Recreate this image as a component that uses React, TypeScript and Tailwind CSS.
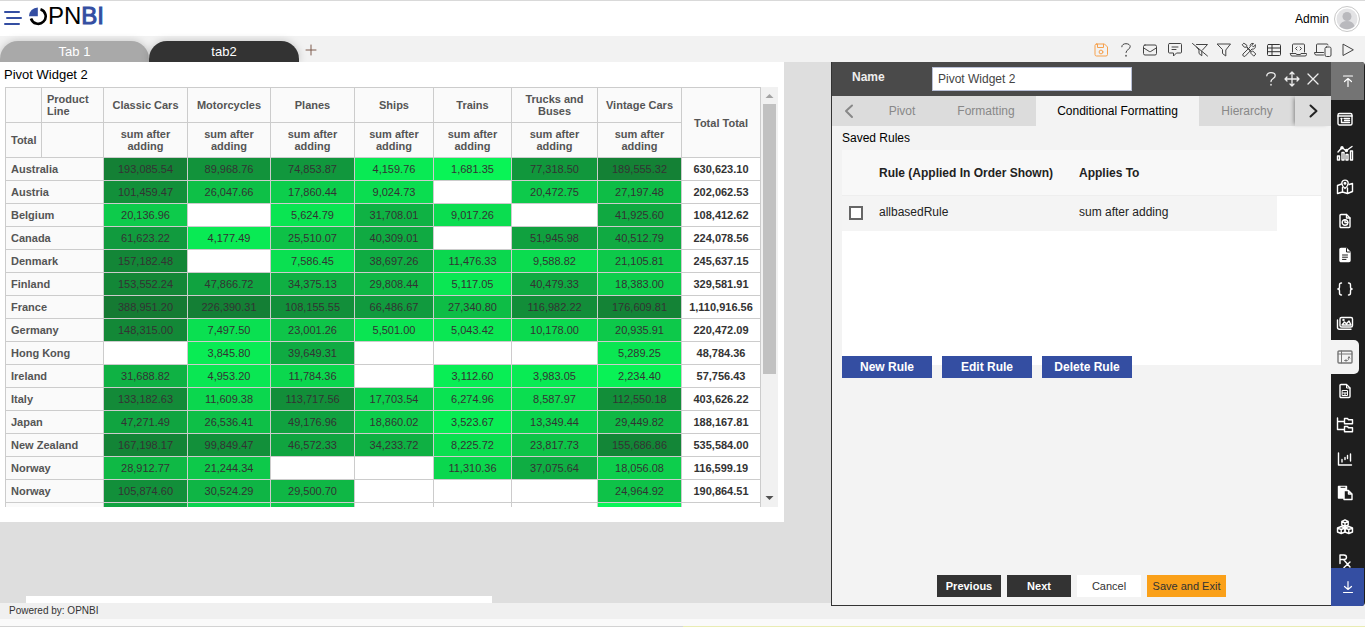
import React, { useState } from 'react';

interface IconProps {
  children: React.ReactNode;
  className?: string;
  weight?: number;
}

const Icon: React.FC<IconProps> = ({ children, className = 'size-4', weight = 1 }) => (
  <svg
    viewBox="0 0 16 16"
    className={`shrink-0 overflow-visible ${className}`}
    fill="none"
    stroke="currentColor"
    strokeWidth={weight}
    strokeLinecap="round"
    strokeLinejoin="round"
    aria-hidden="true"
  >
    {children}
  </svg>
);

const questionPath = (
  <>
    <path d="M3.8 4.8C3.8 2.8 5.600 1.700 8 1.700s4.200 1.100 4.200 3c0 2.800-4.200 2.700-4.200 5.800" />
    <path d="M8 13.500v.6" strokeWidth={1.500} />
  </>
);

const toolbarIcons = [
  {
    label: 'Save',
    color: 'text-[#f6a14d]',
    art: (
      <>
        <path d="M3.500 2h8L14.500 5v7.500a1.500 1.500 0 0 1-1.500 1.500H3.500A1.500 1.500 0 0 1 2 12.500v-9A1.500 1.500 0 0 1 3.500 2z" />
        <path d="M4.500 2.200v3.300h6V2.200" />
        <circle cx="8" cy="10" r="1.900" />
      </>
    ),
  },
  { label: 'Help', color: 'text-[#444]', art: questionPath },
  {
    label: 'Mail',
    color: 'text-[#444]',
    art: (
      <>
        <rect x="1.500" y="3" width="13" height="10" rx="1.500" />
        <path d="M1.800 6l5.500 3.500q.7.400 1.400 0L14.200 6" />
      </>
    ),
  },
  {
    label: 'Comment',
    color: 'text-[#444]',
    art: (
      <>
        <path d="M2.500 1.500h11a1 1 0 0 1 1 1v7.500a1 1 0 0 1-1 1H9.500L6.500 14v-3h-4a1 1 0 0 1-1-1V2.500a1 1 0 0 1 1-1z" />
        <path d="M5 5h6M5 7.500h4" />
      </>
    ),
  },
  {
    label: 'Clear filter',
    color: 'text-[#444]',
    art: (
      <>
        <path d="M4.500 2.500h11L10.500 8M9.800 9v4.800L7 11.500V8L4.500 5" />
        <path d="M.5 1.500L15.500 14" />
      </>
    ),
  },
  {
    label: 'Filter',
    color: 'text-[#444]',
    art: <path d="M1.500 2h13L9.800 8v6L6.500 11.500V8z" />,
  },
  {
    label: 'Tools',
    color: 'text-[#444]',
    art: (
      <>
        <path d="M1.500 2.500L2.800 1.200l3 2v1.600l4.600 4.600 1.400-.4 3 3-2 2.200-3-3 .2-1.500L5.400 5.200H3.700z" />
        <path d="M14.300 3.200l-2.100 1.600-1.300-1.300L12.500 1.500C10.300.8 8.600 2.800 9.300 4.800L2 12a1.600 1.600 0 0 0 2.200 2.200L11 7c2.300.7 4.200-1.500 3.300-3.800z" />
      </>
    ),
  },
  {
    label: 'Table',
    color: 'text-[#333]',
    art: (
      <>
        <rect x="1.500" y="2.500" width="13" height="11" rx="1" />
        <path d="M1.500 6h13M1.500 9.700h13M6 2.500v11" />
      </>
    ),
  },
  {
    label: 'Script',
    color: 'text-[#444]',
    art: (
      <>
        <path d="M1.500 10V3a1 1 0 0 1 1-1h10a1 1 0 0 1 1 1v7" />
        <path d="M-.5 11.500h5.500q0 1 1 1h3q1 0 1-1h5.500v1a1.500 1.500 0 0 1-1.500 1.500h-13a1.500 1.500 0 0 1-1.500-1.500z" />
        <path d="M6 5L4.500 6.500 6 8M9 5l1.500 1.500L9 8" />
      </>
    ),
  },
  {
    label: 'Devices',
    color: 'text-[#444]',
    art: (
      <>
        <path d="M1.500 10V3a1 1 0 0 1 1-1H12q1 0 1 1" />
        <path d="M8.500 10.500H-.5q0 2.500 1.500 2.500h7.500" />
        <rect x="10" y="5" width="6" height="9.500" rx="1.500" />
      </>
    ),
  },
  { label: 'Run', color: 'text-[#444]', art: <path d="M3 2.500v11L13 8z" /> },
];

const fileOutline = 'M4 1.500h5.500L13 5v8.500a1 1 0 0 1-1 1H4a1 1 0 0 1-1-1v-11a1 1 0 0 1 1-1z';

const sideIcons = [
  {
    label: 'List widget',
    art: (
      <>
        <rect x="1" y="2.500" width="14" height="11.500" rx="1.500" />
        <path d="M1 5h14M4 7.500h1M7 7.500h5.500M4.500 7.500v4h8M7.500 9.500h5" />
      </>
    ),
  },
  {
    label: 'Chart widget',
    art: (
      <>
        <path d="M1 7L5 2.500l4 3.200L15 1.500" />
        <circle cx="5" cy="2.800" r="1" />
        <circle cx="9.500" cy="5.500" r="1" />
        <path d="M.5 11h2v4h-2zM5 7.500h2V15H5zM9 9.500h2V15H9zM13.500 6h2v9h-2z" />
      </>
    ),
  },
  {
    label: 'Map widget',
    art: (
      <>
        <path d="M4.500 5L.5 6.500v8L5.500 13l5 1.500 5-2V4.500L12 5.500M5.500 8.500V13M10.500 9v5.500" />
        <path d="M8 9.500S4.800 6.800 4.800 4.300a3.200 3.200 0 0 1 6.400 0C11.200 6.800 8 9.500 8 9.500z" />
        <circle cx="8" cy="4.300" r=".8" />
      </>
    ),
  },
  {
    label: 'Report widget',
    art: (
      <>
        <path d={fileOutline} />
        <path d="M9.500 1.500V5H13" />
        <circle cx="8" cy="9.500" r="2.800" />
        <path d="M8 6.700v2.800h2.800" />
      </>
    ),
  },
  {
    label: 'Text widget',
    art: (
      <>
        <path d={fileOutline} fill="currentColor" />
        <path d="M5.500 8h5M5.500 10.200h5M5.500 12.400h3.500M9.500 1.500V5H13" stroke="#1e1e1e" strokeWidth={1} />
      </>
    ),
  },
  {
    label: 'Code widget',
    art: (
      <path d="M4.500 2Q2.500 2 2.500 4v2Q2.500 8 .8 8q1.700 0 1.700 2v2q0 2 2 2M11.500 2q2 0 2 2v2q0 2 1.700 2-1.700 0-1.700 2v2q0 2-2 2" />
    ),
  },
  {
    label: 'Image widget',
    art: (
      <>
        <rect x="3" y="2.500" width="12.500" height="9.500" rx="1.500" />
        <path d="M.5 5v7.500Q.5 14.200 2.500 14.200H14" />
        <path d="M5 10l2.500-3 2 1.800L12 6l2 4z" />
        <circle cx="6.500" cy="5" r=".5" />
      </>
    ),
  },
  {
    label: 'Pivot widget',
    art: (
      <>
        <rect x="1" y="2" width="14" height="12" rx="1" />
        <path d="M1 5h14M4.500 2v12M8 11.500h2.500Q12 11.500 12 8M8 11.500l1-1M8 11.500l1 1M12 8l-1 1M12 8l1 1" strokeWidth={1} />
      </>
    ),
  },
  {
    label: 'Document widget',
    art: (
      <>
        <path d={fileOutline} />
        <path d="M9.500 1.500V5H13M5.500 7.500h5v5h-5zM5.500 10h5M8 10v2.500" strokeWidth={1} />
      </>
    ),
  },
  {
    label: 'Tree widget',
    art: (
      <>
        <path d="M.5 1v11.500H7M.5 4.500H7" />
        <path d="M7.500 1.500h3l1 1.200h4v4h-8zM7.500 9.500h3l1 1.200h4v4h-8z" />
      </>
    ),
  },
  {
    label: 'Range chart widget',
    art: <path d="M1.500 2v12h13M5 8.500V11M8 6.500v2M10.500 4.500v3M13.500 3v7" />,
  },
  {
    label: 'Copy widget',
    art: (
      <>
        <path d="M1.500 1.500h8V5H6.500v8h-5z" fill="currentColor" />
        <path d="M4 2.300h4" stroke="#1e1e1e" strokeWidth={1} />
        <path d="M7 5.500h4.500L15 9v5.500H7zM11.500 5.500V9H15" />
      </>
    ),
  },
  {
    label: 'Cube widget',
    art: (
      <>
        <path d="M8 .8l3.200 1.500V6L8 7.500 4.800 6V2.300zM4.800 2.500L8 4l3.200-1.500M8 4v3.500" />
        <path d="M4.200 7.500L8 9v4l-3.800 1.500L.5 13V9zM.5 9l3.700 1.500L8 9M4.200 10.500v4" />
        <path d="M11.800 7.500L15.500 9v4l-3.700 1.500L8 13V9zM8 9l3.800 1.500L15.500 9M11.800 10.500v4" />
      </>
    ),
  },
  {
    label: 'Formula widget',
    art: <path d="M3 10.500V2h3.800q2.700 0 2.700 2.200T6.800 6.500H3M6.500 6.500L13 14M13 9l-6 5.500" />,
  },
];

const columns = ['Classic Cars', 'Motorcycles', 'Planes', 'Ships', 'Trains', 'Trucks and Buses', 'Vintage Cars'];

type Row = { name: string; values: (number | null)[]; total: number };

const rows: Row[] = [
  { name: 'Australia', values: [193085.54, 89968.76, 74853.87, 4159.76, 1681.35, 77318.5, 189555.32], total: 630623.1 },
  { name: 'Austria', values: [101459.47, 26047.66, 17860.44, 9024.73, null, 20472.75, 27197.48], total: 202062.53 },
  { name: 'Belgium', values: [20136.96, null, 5624.79, 31708.01, 9017.26, null, 41925.6], total: 108412.62 },
  { name: 'Canada', values: [61623.22, 4177.49, 25510.07, 40309.01, null, 51945.98, 40512.79], total: 224078.56 },
  { name: 'Denmark', values: [157182.48, null, 7586.45, 38697.26, 11476.33, 9588.82, 21105.81], total: 245637.15 },
  { name: 'Finland', values: [153552.24, 47866.72, 34375.13, 29808.44, 5117.05, 40479.33, 18383.0], total: 329581.91 },
  { name: 'France', values: [388951.2, 226390.31, 108155.55, 66486.67, 27340.8, 116982.22, 176609.81], total: 1110916.56 },
  { name: 'Germany', values: [148315.0, 7497.5, 23001.26, 5501.0, 5043.42, 10178.0, 20935.91], total: 220472.09 },
  { name: 'Hong Kong', values: [null, 3845.8, 39649.31, null, null, null, 5289.25], total: 48784.36 },
  { name: 'Ireland', values: [31688.82, 4953.2, 11784.36, null, 3112.6, 3983.05, 2234.4], total: 57756.43 },
  { name: 'Italy', values: [133182.63, 11609.38, 113717.56, 17703.54, 6274.96, 8587.97, 112550.18], total: 403626.22 },
  { name: 'Japan', values: [47271.49, 26536.41, 49176.96, 18860.02, 3523.67, 13349.44, 29449.82], total: 188167.81 },
  { name: 'New Zealand', values: [167198.17, 99849.47, 46572.33, 34233.72, 8225.72, 23817.73, 155686.86], total: 535584.0 },
  { name: 'Norway', values: [28912.77, 21244.34, null, null, 11310.36, 37075.64, 18056.08], total: 116599.19 },
  { name: 'Norway', values: [105874.6, 30524.29, 29500.7, null, null, null, 24964.92], total: 190864.51 },
];

// value, [r, g, b]
const scale: [number, [number, number, number]][] = [
  [0, [8, 250, 88]],
  [5600, [10, 229, 82]],
  [11500, [11, 215, 78]],
  [20000, [13, 203, 75]],
  [26000, [14, 192, 71]],
  [31700, [15, 178, 68]],
  [47900, [16, 163, 64]],
  [61600, [17, 155, 62]],
  [101000, [18, 144, 58]],
  [193000, [20, 128, 53]],
  [389000, [21, 122, 51]],
];

const shade = (value: number) => {
  const upper = Math.max(1, scale.findIndex(([stop]) => stop >= value));
  const [lowStop, low] = scale[upper - 1];
  const [highStop, high] = scale[upper];
  const t = (value - lowStop) / (highStop - lowStop);
  return `rgb(${low.map((c, i) => Math.round(c + (high[i] - c) * t)).join(', ')})`;
};

const money = (value: number) =>
  value.toLocaleString('en-US', { minimumFractionDigits: 2, maximumFractionDigits: 2 });

const Logo = () => (
  <a href="#" className="flex items-center text-[24px] leading-6 text-black" aria-label="OPNBI home">
    <svg viewBox="0 0 19 19" className="size-[19px]" aria-hidden="true">
      <path d="M11.500 2.200A7.500 7.500 0 1 1 2 11.500" fill="none" stroke="#000" strokeWidth="2.600" />
      <path d="M8.800 9.300H0A8.800 8.800 0 0 1 8.800.5z" fill="#344ea2" />
    </svg>
    <span>PN</span>
    <span className="text-[#344ea2] [-webkit-text-stroke:1px_#344ea2]">BI</span>
  </a>
);

const Header = () => (
  <header className="flex h-9 items-center justify-between border-t border-[#d9d9d9] bg-white pl-1 pr-1">
    <div className="flex items-center gap-[7px] pb-[5px]">
      <button type="button" aria-label="Menu" className="text-[#344ea2]">
        <svg viewBox="0 0 18 16" className="mt-1 h-4 w-[18px]" stroke="currentColor" strokeWidth="2" strokeLinecap="round">
          <path d="M1 2h14M3 8h14M1 14h14" />
        </svg>
      </button>
      <Logo />
    </div>
    <div className="flex items-center gap-1 text-xs text-black">
      <span>Admin</span>
      <svg viewBox="0 0 28 28" className="size-7" aria-hidden="true">
        <circle cx="14" cy="14" r="12.500" fill="#fff" stroke="#c8c8c8" />
        <circle cx="14" cy="14" r="10.500" fill="#e3e3e5" />
        <circle cx="14" cy="11.500" r="4.500" fill="#b9b9bd" />
        <path d="M6.500 21q1.500-5 7.500-5t7.500 5a10.500 10.500 0 0 1-15 0z" fill="#b9b9bd" />
      </svg>
    </div>
  </header>
);

const TabBar = () => (
  <nav className="flex h-[26px] items-end justify-between bg-[#f2f2f2] pr-[9px]">
    <div className="flex items-end text-[13px] leading-[21px] text-white">
      <button type="button" className="h-[21px] w-[149px] rounded-t-[18px] bg-[#a9a9a9] shadow-[0_0_8px_rgba(0,0,0,0.2)]">
        Tab 1
      </button>
      <button type="button" className="h-[21px] w-[150px] rounded-t-[18px] bg-[#333] shadow-[0_0_8px_rgba(0,0,0,0.2)]">
        tab2
      </button>
      <button type="button" aria-label="Add tab" className="flex h-6 items-center pl-1 text-[#7d5a4d]">
        <Icon>
          <path d="M3 8h10M8 3v10" />
        </Icon>
      </button>
    </div>
    <div className="flex h-6 w-[263px] items-center justify-between">
      {toolbarIcons.map(({ label, color, art }) => (
        <button key={label} type="button" aria-label={label} className={color}>
          <Icon>{art}</Icon>
        </button>
      ))}
    </div>
  </nav>
);

const headCell = 'border border-[#ccc] bg-[#fafafa] font-bold text-[#555]';

const PivotTable = () => (
  <table className="w-[756px] shrink-0 table-fixed border-collapse text-[11px] leading-3">
    <colgroup>
      <col className="w-9" />
      <col className="w-[62px]" />
      <col className="w-[84px]" />
      <col className="w-[83px]" />
      <col className="w-[84px]" />
      <col className="w-[79px]" />
      <col className="w-[78px]" />
      <col className="w-[86px]" />
      <col className="w-[84px]" />
      <col className="w-[79px]" />
    </colgroup>
    <thead>
      <tr className="h-[35px]">
        <th className={headCell} />
        <th className={`${headCell} px-[5px] text-left`}>Product Line</th>
        {columns.map((name) => (
          <th key={name} className={`${headCell} px-1`}>{name}</th>
        ))}
        <th rowSpan={2} className={headCell}>Total Total</th>
      </tr>
      <tr className="h-[35px]">
        <th className={`${headCell} px-[5px] text-left`}>Total</th>
        <th className={headCell} />
        {columns.map((name) => (
          <th key={name} className={`${headCell} px-3`}>sum after adding</th>
        ))}
      </tr>
    </thead>
    <tbody>
      {rows.map((row, i) => (
        <tr key={i} className="h-[23px]">
          <th colSpan={2} className={`${headCell} px-[5px] text-left`}>{row.name}</th>
          {row.values.map((value, j) => (
            <td
              key={j}
              className="border border-[#ccc] text-center text-[#333]"
              style={value === null ? undefined : { backgroundColor: shade(value) }}
            >
              {value === null ? '' : money(value)}
            </td>
          ))}
          <td className="border border-[#ccc] text-center font-bold text-[#333]">{money(row.total)}</td>
        </tr>
      ))}
      <tr className="h-[23px]">
        <th colSpan={2} className={headCell} />
        <td className="border border-[#ccc] bg-[#11a341]" />
        <td className="border border-[#ccc] bg-[#0bd34e]" />
        <td className="border border-[#ccc] bg-[#0dcb4b]" />
        <td className="border border-[#ccc]" />
        <td className="border border-[#ccc]" />
        <td className="border border-[#ccc]" />
        <td className="border border-[#ccc] bg-[#09f557]" />
        <td className="border border-[#ccc]" />
      </tr>
    </tbody>
  </table>
);

const Canvas = () => (
  <main className="flex min-w-0 flex-1 flex-col bg-[#dedede]">
    <section className="h-[460px] w-[784px] bg-white pl-[5px]">
      <h2 className="-ml-px h-[25px] text-[13px] leading-[25px] text-black">Pivot Widget 2</h2>
      <div className="flex h-[420px] items-start overflow-hidden">
        <PivotTable />
        <div className="flex h-full w-[17px] flex-col items-center bg-[#f1f1f1]">
          <svg viewBox="0 0 17 17" className="h-[17px] w-[17px] shrink-0" aria-hidden="true">
            <path d="M4.500 11h8l-4-4z" fill="#a3a3a3" />
          </svg>
          <div className="h-[270px] w-[13px] bg-[#c1c1c1]" />
          <svg viewBox="0 0 17 17" className="mt-auto h-[17px] w-[17px] shrink-0" aria-hidden="true">
            <path d="M4.500 6h8l-4 4z" fill="#505050" />
          </svg>
        </div>
      </div>
    </section>
    <div className="mt-auto pl-[26px]">
      <div className="h-[7px] w-[466px] bg-white" />
    </div>
  </main>
);

const panelTabs = [
  { name: 'Pivot', width: 'w-[68px]' },
  { name: 'Formatting', width: 'w-[100px]' },
  { name: 'Conditional Formatting', width: 'w-[163px]' },
  { name: 'Hierarchy', width: 'flex-1' },
];

const ruleButton = 'h-[22px] w-[90px] bg-[#344ea2] font-bold text-white';

const WidgetPanel = () => {
  const [name, setName] = useState('Pivot Widget 2');
  const [checked, setChecked] = useState(false);

  return (
    <aside className="flex w-[500px] flex-col border-b border-l border-[#333] bg-[#f3f3f3] text-xs text-black">
      <div className="flex h-[34px] shrink-0 items-center bg-[#4a4a4a] pl-5 pr-[10px]">
        <label htmlFor="widget-name" className="w-20 pb-1 font-bold text-[#eee]">Name</label>
        <input
          id="widget-name"
          value={name}
          onChange={(e) => setName(e.target.value)}
          className="h-6 w-[200px] border border-[#b8bfd6] bg-white px-[5px] text-[#444]"
        />
        <div className="ml-auto flex items-center gap-[5px] text-[#eee]">
          <button type="button" aria-label="Help"><Icon weight={1.3}>{questionPath}</Icon></button>
          <button type="button" aria-label="Move">
            <Icon weight={1.3}>
              <path d="M8 1v14M1 8h14M6 3l2-2 2 2M6 13l2 2 2-2M3 6L1 8l2 2M13 6l2 2-2 2" />
            </Icon>
          </button>
          <button type="button" aria-label="Close">
            <Icon weight={1.3}>
              <path d="M3 3l10 10M13 3L3 13" />
            </Icon>
          </button>
        </div>
      </div>

      <div role="tablist" className="flex h-[30px] shrink-0 bg-[#dcdcdc]">
        <button type="button" aria-label="Scroll tabs left" className="w-9 pl-[9px] text-[#888]">
          <Icon weight={2}>
            <path d="M11 2.500L5 8l6 6" />
          </Icon>
        </button>
        {panelTabs.map((tab) => (
          <button
            key={tab.name}
            type="button"
            role="tab"
            aria-selected={tab.name === 'Conditional Formatting'}
            className={`whitespace-nowrap ${tab.width} ${
              tab.name === 'Conditional Formatting' ? 'bg-[#f3f3f3] text-black' : 'text-[#888]'
            }`}
          >
            {tab.name}
          </button>
        ))}
        <button
          type="button"
          aria-label="Scroll tabs right"
          className="flex w-9 items-center justify-center shadow-[-3px_0_4px_-2px_rgba(0,0,0,0.4)]"
        >
          <Icon weight={2} className="size-4 text-[#222]">
            <path d="M5.500 2.500l6 5.500-6 5.500" />
          </Icon>
        </button>
      </div>

      <div className="flex flex-1 flex-col px-[10px] pb-2">
        <h3 className="h-6 leading-6">Saved Rules</h3>
        <div className="h-[215px] bg-white">
          <div className="h-[46px] border-b border-[#eee] bg-[#f8f8f8]">
            <table className="w-[435px] table-fixed border-collapse text-left text-[#222]">
              <colgroup>
                <col className="w-[37px]" />
                <col className="w-[200px]" />
                <col />
              </colgroup>
              <thead>
                <tr className="h-[46px]">
                  <th aria-label="Selected" />
                  <th className="whitespace-nowrap">Rule (Applied In Order Shown)</th>
                  <th>Applies To</th>
                </tr>
              </thead>
              <tbody>
                <tr className="h-[35px] bg-[#f4f4f4]">
                  <td className="pb-[2px] pl-[7px]">
                    <input
                      id="rule-allbased"
                      type="checkbox"
                      checked={checked}
                      onChange={() => setChecked(!checked)}
                      className="block size-[14px] appearance-none border-2 border-[#666] bg-white checked:bg-[#344ea2]"
                    />
                  </td>
                  <td className="pb-1"><label htmlFor="rule-allbased">allbasedRule</label></td>
                  <td className="pb-1">sum after adding</td>
                </tr>
              </tbody>
            </table>
          </div>
        </div>
        <div className="-mt-[9px] flex gap-[10px]">
          <button type="button" className={ruleButton}>New Rule</button>
          <button type="button" className={ruleButton}>Edit Rule</button>
          <button type="button" className={ruleButton}>Delete Rule</button>
        </div>

        <div className="mt-auto flex justify-center gap-[6px] text-[11px]">
          <button type="button" className="h-[22px] w-16 bg-[#333] font-bold text-white">Previous</button>
          <button type="button" className="h-[22px] w-16 bg-[#333] font-bold text-white">Next</button>
          <button type="button" className="h-[22px] w-16 bg-white text-[#333]">Cancel</button>
          <button type="button" className="h-[22px] w-[79px] whitespace-nowrap bg-[#faa019] text-[#333]">Save and Exit</button>
        </div>
      </div>
    </aside>
  );
};

const SideBar = () => (
  <div className="flex w-[34px] flex-col overflow-hidden rounded-r-[4px] bg-[#1e1e1e] text-white">
    <button type="button" aria-label="Scroll up" className="mr-px flex h-[38px] shrink-0 items-center justify-center bg-[#747474]">
      <Icon weight={1.2}>
        <path d="M3.500 3h9M8 13.500V5.500M4.500 8.500L8 5.500l3.500 3" />
      </Icon>
    </button>
    <div className="flex h-0 grow flex-col overflow-hidden pt-[2px]">
      {sideIcons.map(({ label, art }) => (
        <button
          key={label}
          type="button"
          aria-label={label}
          className={`mr-[6px] flex h-[34px] shrink-0 items-center justify-center rounded-r-[5px] ${
            label === 'Pivot widget' ? 'bg-[#f3f3f3] text-[#777]' : ''
          }`}
        >
          <Icon weight={1.4}>{art}</Icon>
        </button>
      ))}
    </div>
    <button type="button" aria-label="Scroll down" className="mr-px flex h-[38px] shrink-0 items-center justify-center bg-[#344ea2]">
      <Icon weight={1.2}>
        <path d="M3.500 13.500h9M8 2.500v8M4.500 7.500L8 10.500l3.500-3" />
      </Icon>
    </button>
  </div>
);

const App: React.FC = () => (
  <div className="flex min-h-screen flex-col overflow-hidden bg-[#f0f0f0] font-['Liberation_Sans',Arial,sans-serif]">
    <Header />
    <TabBar />
    <div className="flex flex-1">
      <div className="flex min-w-0 flex-1 flex-col">
        <Canvas />
        <footer className="h-4 pl-[9px] text-[10px] leading-4 text-[#333]">Powered by: OPNBI</footer>
      </div>
      <div className="mb-[13px] flex">
        <WidgetPanel />
        <SideBar />
      </div>
    </div>
    <div className="flex h-2 items-end bg-[#fafafa]">
      <div className="h-px flex-1 bg-[#d3d3d3]" />
      <div className="h-px flex-1 bg-[#e9ecb4]" />
    </div>
  </div>
);

export default App;
